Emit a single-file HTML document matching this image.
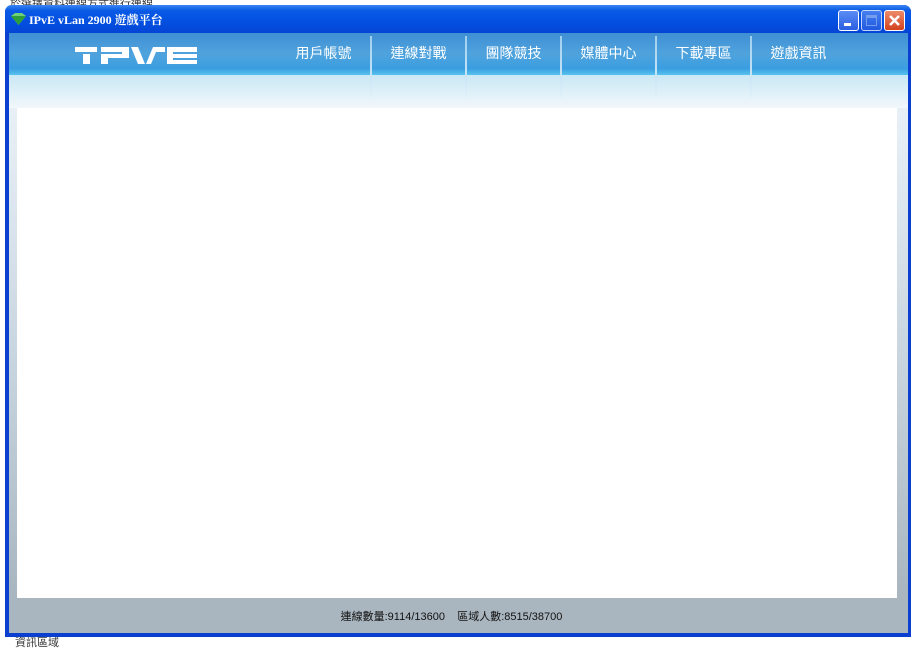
<!DOCTYPE html>
<html><head><meta charset="utf-8"><style>
*{margin:0;padding:0;box-sizing:border-box}
body{width:915px;height:640px;background:#fff;position:relative;overflow:hidden;font-family:"Liberation Sans","Noto Sans CJK TC",sans-serif}
.win{position:absolute;left:5px;top:5px;width:906px;height:632px;background:#0a3fcf;border-radius:7px 7px 0 0}
.title{position:absolute;left:0;top:0;width:906px;height:28px;border-radius:7px 7px 0 0;background:linear-gradient(#3a86f2,#0a5ae6 20%,#0350e0 60%,#0545d6)}
.title span{position:absolute;left:24px;top:6px;color:#fff;font:bold 12px "Liberation Serif","Noto Serif CJK SC",serif}
.body{position:absolute;left:4px;top:28px;width:899px;height:600px;background:linear-gradient(#eef4f9 0,#e6eef5 100px,#c5d2dc 350px,#aab6bf 560px,#aab6bf)}
.hdr{position:absolute;left:0;top:0;width:899px;height:42px;background:linear-gradient(#3f8fd4,#4fa3dd 50%,#3b9ee0 85%,#56c3ee)}
.band{position:absolute;left:0;top:42px;width:899px;height:33px;background:linear-gradient(#c9e8f5,#f2f7fb)}
.nav{position:absolute;top:0;height:66px;width:95px;color:#fff;font-size:14px;text-align:center;line-height:40px}
.sep{position:absolute;top:3px;width:2px;height:62px;background:linear-gradient(#9dcfef,#e0f1fa)}
.content{position:absolute;left:8px;top:75px;width:880px;height:490px;background:#fff}
.status{position:absolute;left:-7px;top:575px;width:899px;text-align:center;font-size:11px;color:#111}
.btn{position:absolute;top:5px;width:21px;height:21px;border:1px solid #fff;border-radius:3px}
</style></head><body>
<div style="position:absolute;left:10px;top:-5px;font-size:11px;color:#333">於選擇資料連線方式進行連線</div>
<div style="position:absolute;left:15px;top:634px;font-size:11px;color:#333">資訊區域</div>
<div class="win">
<div class="title">
<svg style="position:absolute;left:6px;top:8px" width="15" height="12"><polygon points="0,3 4,0 11,0 15,3 7.5,12" fill="#6fd07a"/><polygon points="0,3 15,3 7.5,12" fill="#2d9e3e"/></svg>
<span>IPvE vLan 2900 遊戲平台</span>
<div class="btn" style="left:833px;background:linear-gradient(#5b8cf5,#2a5fe0)"><div style="position:absolute;left:5px;top:12px;width:7px;height:3px;background:#fff"></div></div>
<div class="btn" style="left:856px;background:linear-gradient(#5b8cf5,#2a5fe0);opacity:.75"><div style="position:absolute;left:4px;top:4px;width:11px;height:11px;border:1px solid #9bb7f0;border-top-width:3px"></div></div>
<div class="btn" style="left:879px;background:linear-gradient(#ec8a6a,#d2431d)"><svg width="19" height="19" style="position:absolute;left:0;top:0"><path d="M5 5L14 14M14 5L5 14" stroke="#fff" stroke-width="2.5"/></svg></div>
</div>
<div class="body">
<div class="hdr"></div>
<div class="band"></div>
<svg style="position:absolute;left:66px;top:14px" width="125" height="19" fill="#fff">
<rect x="0" y="0" width="22" height="5"/><rect x="8" y="7" width="7" height="10"/>
<rect x="26" y="0" width="28" height="5"/><rect x="26" y="7" width="28" height="4"/><rect x="47" y="0" width="7" height="11"/><rect x="26" y="7" width="7" height="10"/>
<polygon points="56,0 63,0 70,17 63,17"/><polygon points="71,17 78,0 90,0 90,5 81,5 76,17"/>
<rect x="92" y="0" width="30" height="5"/><rect x="92" y="7" width="30" height="4"/><rect x="92" y="13" width="30" height="4"/><rect x="92" y="0" width="6" height="17"/>
</svg>
<div class="nav" style="left:267px">用戶帳號</div>
<div class="nav" style="left:362px">連線對戰</div>
<div class="nav" style="left:457px">團隊競技</div>
<div class="nav" style="left:552px">媒體中心</div>
<div class="nav" style="left:647px">下載專區</div>
<div class="nav" style="left:742px">遊戲資訊</div>
<div class="sep" style="left:361px"></div><div class="sep" style="left:456px"></div><div class="sep" style="left:551px"></div><div class="sep" style="left:646px"></div><div class="sep" style="left:741px"></div>
<div class="content"></div>
<div class="status">連線數量:9114/13600&nbsp;&nbsp;&nbsp;&nbsp;區域人數:8515/38700</div>
</div>
</div>
</body></html>
